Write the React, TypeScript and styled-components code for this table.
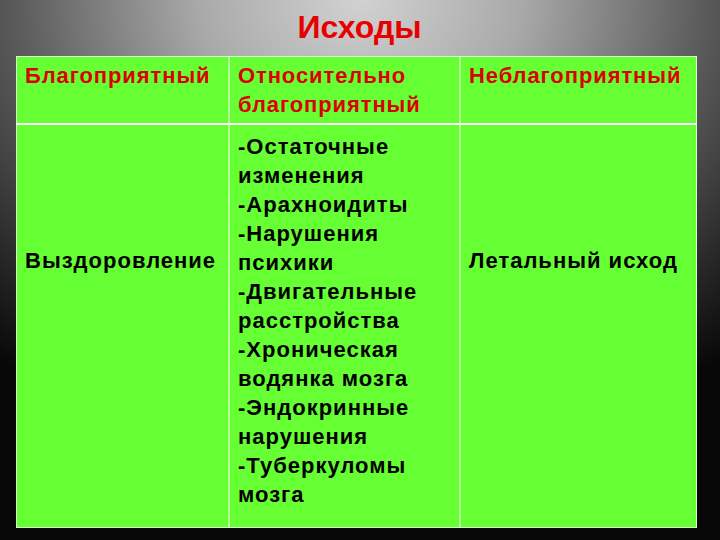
import styled, { createGlobalStyle } from 'styled-components';

const GlobalStyle = createGlobalStyle`
  html, body {
    margin: 0;
    padding: 0;
    background: #000;
  }
`;

const Slide = styled.div`
  width: 720px;
  height: 540px;
  box-sizing: border-box;
  padding: 0 23px 12px 16px;
  display: flex;
  flex-direction: column;
  font-family: 'Liberation Sans', Arial, sans-serif;
  background:
    radial-gradient(ellipse 80% 85% at 50% 0%, #d2d2d2 0%, #a9a9a9 28%, #5f5f5f 58%, #2a2a2a 82%, #080808 100%);
  overflow: hidden;
`;

const Title = styled.h1`
  margin: 0;
  height: 54px;
  display: flex;
  align-items: center;
  justify-content: center;
  font-size: 32px;
  font-weight: bold;
  color: #e80000;
  padding-left: 6px;
  padding-bottom: 2px;
`;

const Table = styled.div`
  flex: 1;
  display: grid;
  grid-template-columns: 213px 231px 1fr;
  grid-template-rows: 68px 1fr;
  background: #66ff33;
  border: 1px solid #d8ffc8;
  box-sizing: border-box;
`;

const Cell = styled.div<{ $head?: boolean; $top?: number; $last?: boolean }>`
  padding: ${({ $top }) => $top ?? 4}px 0 0 8px;
  border-right: ${({ $last }) => ($last ? 'none' : '2px solid #b8ff98')};
  border-bottom: ${({ $head }) => ($head ? '2px solid #ffffff' : 'none')};
  color: ${({ $head }) => ($head ? '#dd0000' : '#000')};
  font-size: 22px;
  font-weight: bold;
  line-height: 29px;
  white-space: pre-line;
  letter-spacing: ${({ $head }) => ($head ? '0.9px' : '1px')};
`;

export default function App() {
  return (
    <>
      <GlobalStyle />
      <Slide>
        <Title>Исходы</Title>
        <Table>
          <Cell $head>Благоприятный</Cell>
          <Cell $head>{'Относительно\nблагоприятный'}</Cell>
          <Cell $head $last>Неблагоприятный</Cell>
          <Cell $top={121}>Выздоровление</Cell>
          <Cell $top={7}>
            {'-Остаточные\nизменения\n-Арахноидиты\n-Нарушения\nпсихики\n-Двигательные\nрасстройства\n-Хроническая\nводянка мозга\n-Эндокринные\nнарушения\n-Туберкуломы\nмозга'}
          </Cell>
          <Cell $top={121} $last>Летальный исход</Cell>
        </Table>
      </Slide>
    </>
  );
}
